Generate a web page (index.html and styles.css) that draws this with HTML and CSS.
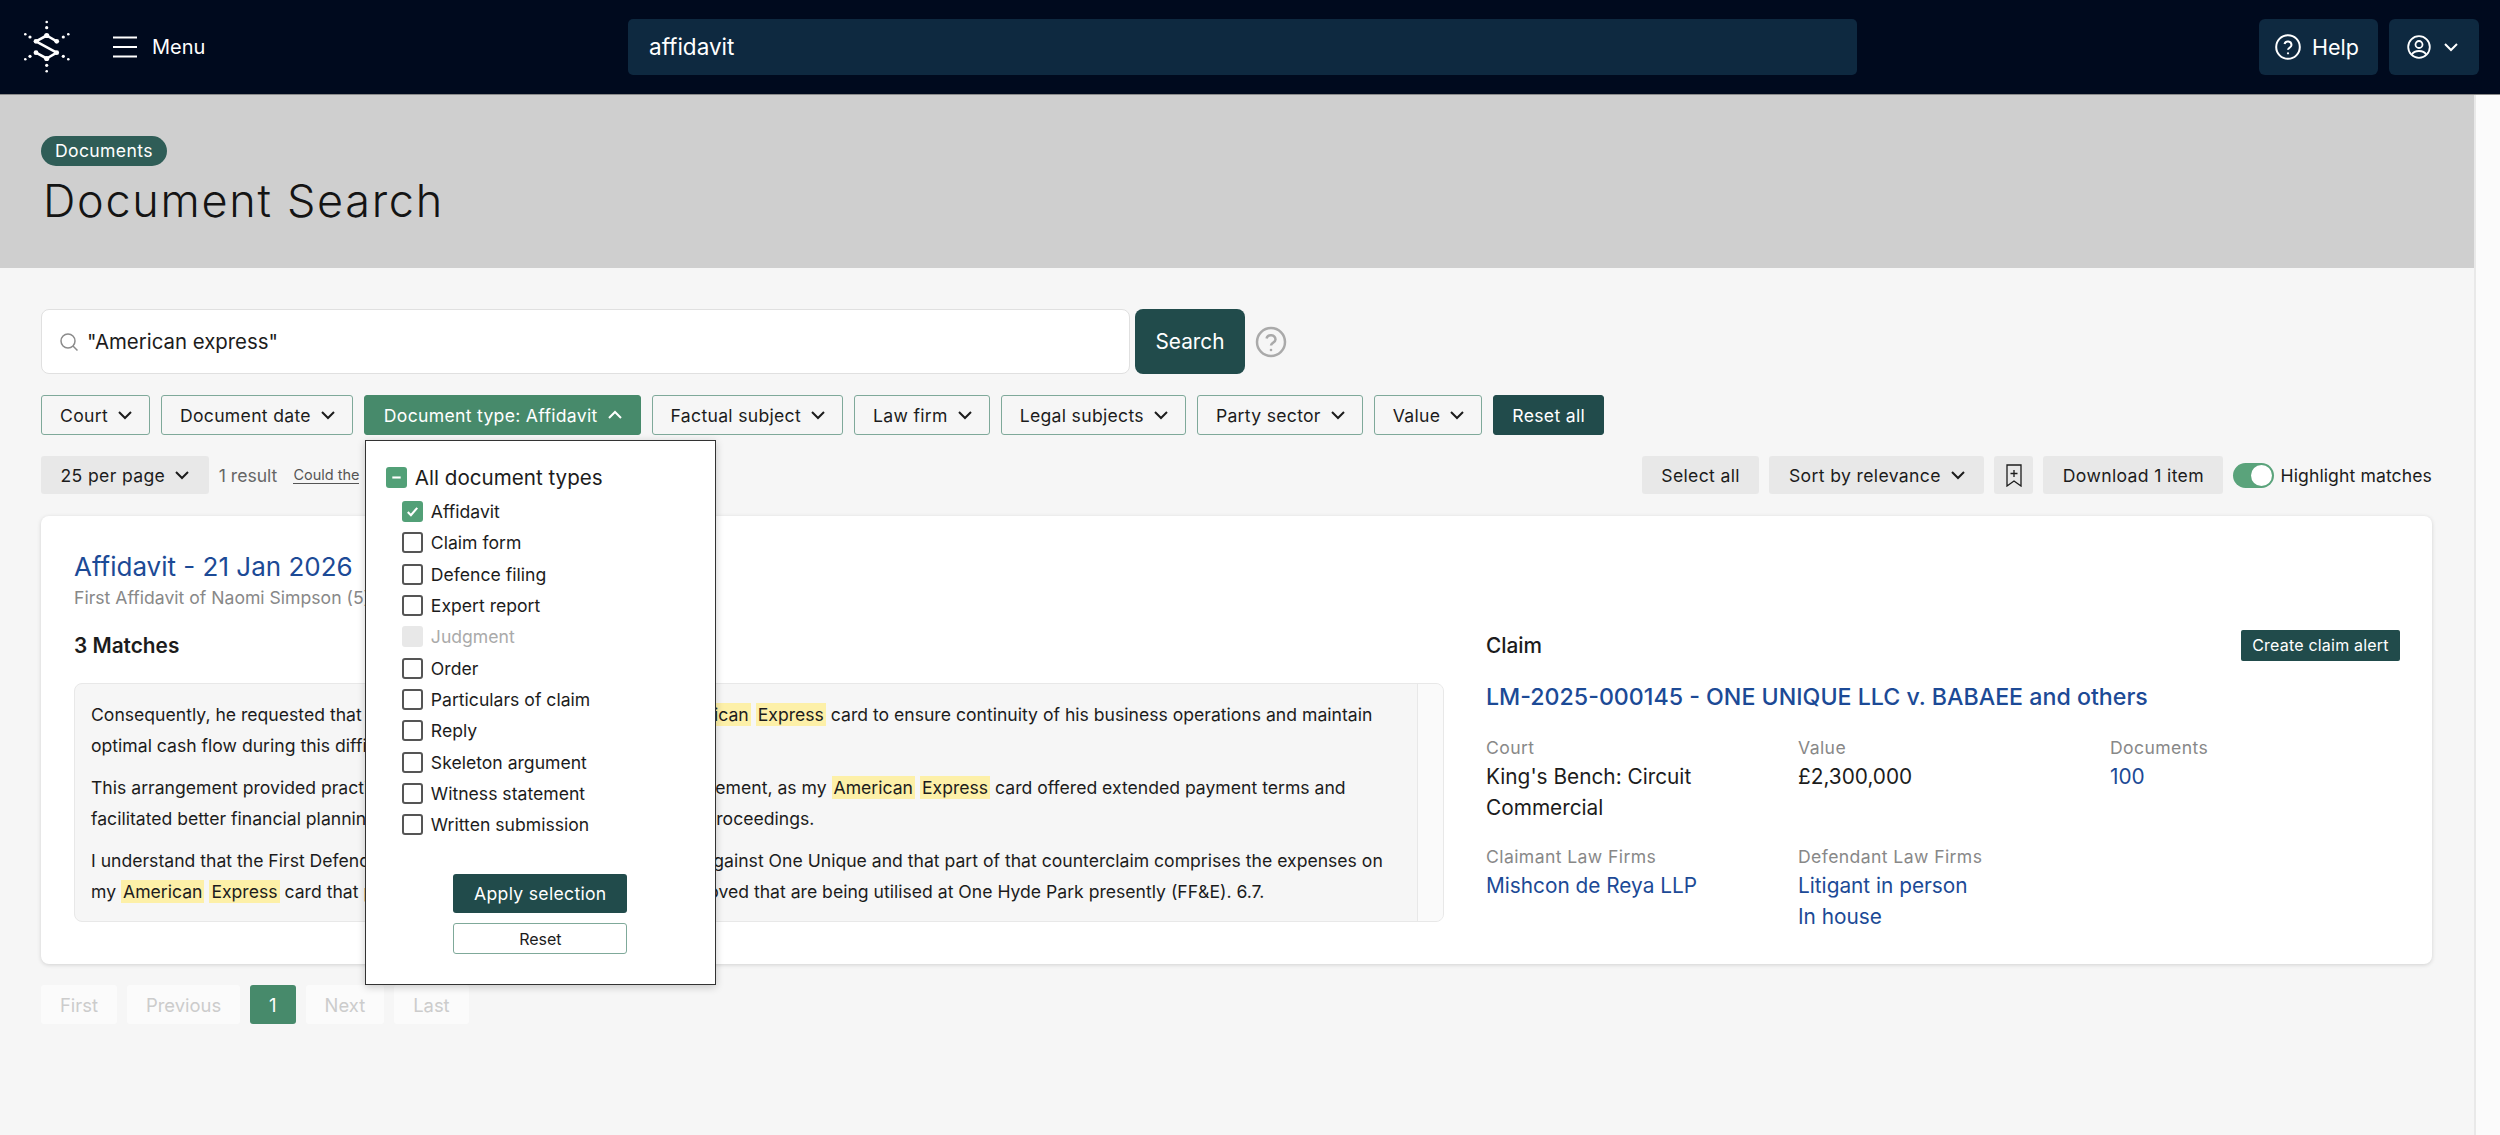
FILE: index.html
```html
<!DOCTYPE html>
<html lang="en">

<head>
    <meta charset="UTF-8">
    <title>Document Search</title>
    <link rel="stylesheet" href="styles.css">
</head>

<body>
    <header class="topbar">
        <svg class="logo" viewBox="23 18 48 54">
            <path d="M56.7 39.3 46.7 33.5 36 39.3 56.7 50.7 46.7 56.5 36 50.7" fill="none" stroke="#fff" stroke-width="2.6" stroke-linejoin="round"/>
            <g fill="#fff">
                <circle cx="46.7" cy="33.5" r="2.6"/><circle cx="36" cy="39.3" r="2.4"/><circle cx="56.7" cy="39.3" r="2.4"/>
                <circle cx="56.7" cy="50.7" r="2.4"/><circle cx="36" cy="50.7" r="2.4"/><circle cx="46.7" cy="56.5" r="2.6"/>
                <circle cx="46.7" cy="20" r="1.3"/><circle cx="46.7" cy="25.7" r="1.6"/>
                <circle cx="46.7" cy="63.3" r="1.6"/><circle cx="46.7" cy="69.3" r="1.3"/>
                <circle cx="25.3" cy="32.3" r="1.3"/><circle cx="30" cy="35" r="1.6"/>
                <circle cx="68.3" cy="32.3" r="1.3"/><circle cx="63.3" cy="35" r="1.6"/>
                <circle cx="25.3" cy="57.3" r="1.3"/><circle cx="30" cy="54.3" r="1.6"/>
                <circle cx="68.3" cy="57.3" r="1.3"/><circle cx="63.3" cy="54.3" r="1.6"/>
            </g>
        </svg>
        <div class="menu-toggle">
            <svg class="menu-icon" viewBox="0 0 24 22"><path d="M0 1.500H24M0 11H24M0 20.500H24"/></svg>
            <span>Menu</span>
        </div>
        <div class="topbar-search">affidavit</div>
        <div class="topbar-actions">
            <div class="topbar-btn">
                <svg class="help-icon" viewBox="0 0 26 26"><circle cx="13" cy="13" r="11.800"/><path d="M9.500 10a3.600 3.600 0 0 1 7 1c0 2.400-3.500 3-3.500 4.800"/><circle class="dot" cx="13" cy="19.300" r="1.100"/></svg>
                <span>Help</span>
            </div>
            <div class="topbar-btn user-btn">
                <svg class="user-icon" viewBox="0 0 24 24"><circle cx="12" cy="12" r="10.800"/><circle cx="12" cy="9.500" r="3.500"/><path d="M4.800 19.500c1.500-2.600 4-3.500 7.200-3.500s5.700.9 7.200 3.500"/></svg>
                <svg class="chev chev-light" viewBox="0 0 14 14"><path d="M1 4l6 6 6-6"/></svg>
            </div>
        </div>
    </header>

    <div class="page">
        <div class="content">
            <section class="band">
                <span class="pill">Documents</span>
                <h1>Document Search</h1>
            </section>

            <main class="main">
                <div class="search-row">
                    <div class="search-input">
                        <svg class="search-icon" viewBox="0 0 20 20"><circle cx="9" cy="9" r="7"/><path d="M14 14l4.500 4.500"/></svg>
                        <span>"American express"</span>
                    </div>
                    <button class="search-btn">Search</button>
                    <svg class="search-help" viewBox="0 0 32 32"><circle cx="16" cy="16" r="14"/><path d="M11.500 12.500a4.600 4.600 0 0 1 9 1c0 3-4.500 3.500-4.500 6"/><circle class="dot" cx="16" cy="24" r="1.300"/></svg>
                </div>

                <div class="filters">
                    <button class="filter">Court<svg class="chev" viewBox="0 0 14 14"><path d="M1 4l6 6 6-6"/></svg></button>
                    <button class="filter">Document date<svg class="chev" viewBox="0 0 14 14"><path d="M1 4l6 6 6-6"/></svg></button>
                    <div class="filter-wrap">
                        <button class="filter filter-open">Document type: Affidavit<svg class="chev chev-light" viewBox="0 0 14 14"><path d="M1 10l6-6 6 6"/></svg></button>
                        <div class="dropdown">
                            <div class="check-all">
                                <span class="box box-on"><svg viewBox="0 0 20 20"><path d="M6 10h8"/></svg></span>
                                All document types
                            </div>
                            <ul class="check-list">
                                <li><span class="box box-on"><svg viewBox="0 0 20 20"><path d="M5.500 10.500l3 3 6-7"/></svg></span>Affidavit</li>
                                <li><span class="box"></span>Claim form</li>
                                <li><span class="box"></span>Defence filing</li>
                                <li><span class="box"></span>Expert report</li>
                                <li class="disabled"><span class="box"></span>Judgment</li>
                                <li><span class="box"></span>Order</li>
                                <li><span class="box"></span>Particulars of claim</li>
                                <li><span class="box"></span>Reply</li>
                                <li><span class="box"></span>Skeleton argument</li>
                                <li><span class="box"></span>Witness statement</li>
                                <li><span class="box"></span>Written submission</li>
                            </ul>
                            <div class="dropdown-actions">
                                <button class="apply-btn">Apply selection</button>
                                <button class="reset-btn">Reset</button>
                            </div>
                        </div>
                    </div>
                    <button class="filter">Factual subject<svg class="chev" viewBox="0 0 14 14"><path d="M1 4l6 6 6-6"/></svg></button>
                    <button class="filter">Law firm<svg class="chev" viewBox="0 0 14 14"><path d="M1 4l6 6 6-6"/></svg></button>
                    <button class="filter">Legal subjects<svg class="chev" viewBox="0 0 14 14"><path d="M1 4l6 6 6-6"/></svg></button>
                    <button class="filter">Party sector<svg class="chev" viewBox="0 0 14 14"><path d="M1 4l6 6 6-6"/></svg></button>
                    <button class="filter">Value<svg class="chev" viewBox="0 0 14 14"><path d="M1 4l6 6 6-6"/></svg></button>
                    <button class="filter-reset">Reset all</button>
                </div>

                <div class="toolbar">
                    <button class="tool">25 per page<svg class="chev" viewBox="0 0 14 14"><path d="M1 4l6 6 6-6"/></svg></button>
                    <span class="result-count">1 result</span>
                    <a class="could-link">Could the</a>
                    <div class="toolbar-right">
                        <button class="tool">Select all</button>
                        <button class="tool">Sort by relevance<svg class="chev" viewBox="0 0 14 14"><path d="M1 4l6 6 6-6"/></svg></button>
                        <button class="tool tool-icon"><svg class="bookmark" viewBox="0 0 16 23"><path d="M1 1h14v21l-7-5-7 5zM8 6v7M4.500 9.500h7"/></svg></button>
                        <button class="tool">Download 1 item</button>
                        <span class="toggle"><span class="knob"></span></span>
                        <span class="toggle-label">Highlight matches</span>
                    </div>
                </div>

                <article class="card">
                    <h2 class="doc-title">Affidavit - 21 Jan 2026</h2>
                    <p class="doc-sub">First Affidavit of Naomi Simpson (5)</p>
                    <div class="card-cols">
                        <div>
                            <div class="col-head"><h3>3 Matches</h3></div>
                            <div class="matches">
                                <div class="matches-text">
                                    <p>Consequently, he requested that I allow him to use my own, personal <mark>American</mark> <mark>Express</mark> card to ensure continuity of his business operations and maintain optimal cash flow during this difficult period for the company.</p>
                                    <p>This arrangement provided practical benefits for both of us, under our agreement, as my <mark>American</mark> <mark>Express</mark> card offered extended payment terms and facilitated better financial planning for the future legal costs of both these proceedings.</p>
                                    <p>I understand that the First Defendant has now brought a big counterclaim against One Unique and that part of that counterclaim comprises the expenses on my <mark>American</mark> <mark>Express</mark> card that paid for the fittings, and items I have approved that are being utilised at One Hyde Park presently (FF&amp;E). 6.7.</p>
                                </div>
                                <div class="matches-scroll"></div>
                            </div>
                        </div>
                        <div>
                            <div class="col-head col-head-claim">
                                <h3>Claim</h3>
                                <button class="alert-btn">Create claim alert</button>
                            </div>
                            <a class="claim-title">LM-2025-000145 - ONE UNIQUE LLC v. BABAEE and others</a>
                            <div class="claim-grid">
                                <div><div class="label">Court</div><div class="value">King's Bench: Circuit Commercial</div></div>
                                <div><div class="label">Value</div><div class="value">£2,300,000</div></div>
                                <div><div class="label">Documents</div><div class="value link">100</div></div>
                                <div><div class="label">Claimant Law Firms</div><div class="value link">Mishcon de Reya LLP</div></div>
                                <div><div class="label">Defendant Law Firms</div><div class="value link">Litigant in person<br>In house</div></div>
                            </div>
                        </div>
                    </div>
                </article>

                <nav class="pager">
                    <span class="page-btn">First</span>
                    <span class="page-btn">Previous</span>
                    <span class="page-btn page-on">1</span>
                    <span class="page-btn">Next</span>
                    <span class="page-btn">Last</span>
                </nav>
            </main>
        </div>
        <div class="scroll-track"></div>
    </div>
</body>

</html>
```

FILE: styles.css
```css
* {
    box-sizing: border-box;
}

html,
body {
    height: 100%;
}

body {
    margin: 0;
    overflow: hidden;
    display: flex;
    flex-direction: column;
    font-family: Inter, "Liberation Sans", sans-serif;
    font-size: 17.600px;
    color: #1c1c1c;
    background-color: #f6f6f6;
}

button {
    font-family: inherit;
    cursor: pointer;
}

svg {
    flex: none;
}

/* Top bar */
.topbar {
    height: 95px;
    flex: none;
    display: flex;
    align-items: center;
    padding: 0 21px 1px 23px;
    background-color: #000a1e;
    border-bottom: 1px solid #8a8a8a;
    color: white;
}

.logo {
    width: 48px;
    height: 54px;
}

.menu-toggle {
    width: 557px;
    padding-left: 42px;
    display: flex;
    align-items: center;
    gap: 15px;
    font-size: 20px;
}

.menu-icon {
    width: 24px;
    height: 22px;
    fill: none;
    stroke: white;
    stroke-width: 2;
}

.topbar-search {
    width: 1229px;
    height: 56px;
    display: flex;
    align-items: center;
    padding-left: 21px;
    background-color: #0e2940;
    border-radius: 5px;
    font-size: 22.500px;
}

.topbar-actions {
    margin-left: auto;
    display: flex;
    gap: 11px;
}

.topbar-btn {
    width: 119px;
    height: 56px;
    display: flex;
    align-items: center;
    gap: 11px;
    padding-left: 16px;
    background-color: #0e2940;
    border-radius: 6px;
    font-size: 21.500px;
}

.user-btn {
    width: 90px;
    gap: 13px;
    padding-left: 18px;
}

.help-icon,
.user-icon {
    width: 26px;
    height: 26px;
    fill: none;
    stroke: white;
    stroke-width: 2;
}

.user-icon {
    width: 24px;
    height: 24px;
    stroke-width: 1.800;
}

.help-icon .dot,
.search-help .dot {
    stroke: none;
}

.help-icon .dot {
    fill: white;
}

.chev {
    width: 14px;
    height: 14px;
    margin-left: 10px;
    fill: none;
    stroke: #1c1c1c;
    stroke-width: 2;
}

.chev-light {
    stroke: white;
}

.user-btn .chev {
    margin-left: 0;
}

/* Page */
.page {
    flex: 1;
    display: flex;
    min-height: 0;
}

.content {
    flex: 1;
    min-width: 0;
}

.scroll-track {
    width: 26px;
    flex: none;
    background-color: #fbfbfb;
    border-left: 2px solid #e9e9e9;
}

.band {
    height: 173px;
    padding: 41px 44px 0 41px;
    background-color: #cfcfcf;
}

.pill {
    display: block;
    width: fit-content;
    height: 30px;
    padding: 0 14px;
    line-height: 30px;
    border-radius: 15px;
    background-color: #2f5d57;
    color: white;
    letter-spacing: 0.350px;
}

h1 {
    margin: 7px 0 0 2px;
    font-size: 45px;
    line-height: 56px;
    font-weight: 300;
    letter-spacing: 1.700px;
    color: #141414;
}

.main {
    padding: 41px 42px 0 41px;
}

.search-row {
    display: flex;
    align-items: center;
}

.search-input {
    width: 1089px;
    height: 65px;
    display: flex;
    align-items: center;
    gap: 8px;
    padding-left: 17px;
    background-color: white;
    border: 1px solid #e0e0e0;
    border-radius: 8px;
    font-size: 20.400px;
}

.search-icon {
    width: 20px;
    height: 20px;
    fill: none;
    stroke: #8b8b8b;
    stroke-width: 1.500;
}

.search-btn {
    width: 110px;
    height: 65px;
    margin-left: 5px;
    border: none;
    border-radius: 8px;
    background-color: #214b4b;
    color: white;
    font-size: 20.800px;
}

.search-help {
    width: 32px;
    height: 32px;
    margin-left: 10px;
    fill: none;
    stroke: #aaa;
    stroke-width: 2.500;
}

.search-help .dot {
    fill: #aaa;
}

/* Filters */
.filters {
    display: flex;
    gap: 11px;
    margin-top: 21px;
}

.filter,
.filter-reset {
    height: 40px;
    display: flex;
    align-items: center;
    padding: 0 17px 0 18px;
    background: transparent;
    border: 1px solid #7fa99a;
    border-radius: 3px;
    color: #1c1c1c;
    font-size: 17.600px;
    letter-spacing: 0.300px;
    white-space: nowrap;
}

.filter-open {
    padding: 0 18px 0 19px;
    background-color: #478a6b;
    border-color: #478a6b;
    color: white;
}

.filter-reset {
    padding: 0 18px;
    background-color: #214b4b;
    border-color: #214b4b;
    color: white;
}

.filter-wrap {
    position: relative;
}

.dropdown {
    position: absolute;
    top: 45px;
    left: 1px;
    z-index: 5;
    width: 351px;
    height: 545px;
    padding: 26px 0 0;
    background-color: white;
    border: 1px solid #333;
    box-shadow: 0 2px 8px rgba(0, 0, 0, 0.2);
}

.check-all {
    display: flex;
    align-items: center;
    gap: 8px;
    padding-left: 20px;
    height: 21px;
    font-size: 20.600px;
}

.box {
    width: 21px;
    height: 21px;
    flex: none;
    display: inline-flex;
    border: 2px solid #555;
    border-radius: 3px;
}

.box-on {
    border: none;
    background-color: #52a077;
}

.box svg {
    width: 21px;
    height: 21px;
    fill: none;
    stroke: white;
    stroke-width: 2;
}

.check-list {
    list-style: none;
    margin: 8px 0 0;
    padding: 0 0 0 36px;
}

.check-list li {
    height: 31.300px;
    display: flex;
    align-items: center;
    gap: 8px;
}

.check-list .disabled {
    color: #aaa;
}

.check-list .disabled .box {
    border: none;
    background-color: #e8e8e8;
}

.dropdown-actions {
    margin-top: 34px;
    display: flex;
    flex-direction: column;
    align-items: center;
    gap: 10px;
}

.apply-btn,
.reset-btn {
    width: 174px;
    border-radius: 3px;
}

.apply-btn {
    height: 39px;
    border: none;
    background-color: #214b4b;
    color: white;
    font-size: 17.600px;
    letter-spacing: 0.300px;
}

.reset-btn {
    height: 31px;
    background-color: white;
    border: 1px solid #7fa99a;
    color: #1c1c1c;
    font-size: 16px;
}

/* Toolbar */
.toolbar {
    display: flex;
    align-items: center;
    margin-top: 21px;
    height: 38px;
}

.tool {
    height: 38px;
    display: flex;
    align-items: center;
    padding: 0 19.500px;
    background-color: #e8e8e8;
    border: none;
    border-radius: 3px;
    color: #1c1c1c;
    font-size: 17.600px;
    letter-spacing: 0.350px;
    white-space: nowrap;
}

.tool-icon {
    width: 39px;
    padding: 0;
    justify-content: center;
}

.bookmark {
    width: 16px;
    height: 23px;
    fill: none;
    stroke: #1c1c1c;
    stroke-width: 1.300;
}

.result-count {
    margin-left: 10px;
    color: #666;
}

.could-link {
    margin-left: 16px;
    color: #555;
    font-size: 14.500px;
    border-bottom: 1px solid #555;
}

.toolbar-right {
    margin-left: auto;
    display: flex;
    align-items: center;
    gap: 10px;
}

.toggle {
    width: 41px;
    height: 25px;
    display: flex;
    justify-content: flex-end;
    padding: 2px;
    background-color: #5aa37b;
    border-radius: 13px;
}

.knob {
    width: 21px;
    height: 21px;
    border-radius: 50%;
    background-color: white;
}

.toggle-label {
    margin-left: -4px;
    letter-spacing: 0.100px;
}

/* Result card */
.card {
    margin-top: 22px;
    height: 448px;
    padding: 34px 32px 0 33px;
    background-color: white;
    border-radius: 8px;
    box-shadow: 0 1px 4px rgba(0, 0, 0, 0.15);
}

.doc-title {
    margin: 0;
    font-size: 26px;
    line-height: 34px;
    font-weight: 400;
    color: #1c4a96;
}

.doc-sub {
    margin: 1px 0 0;
    line-height: 26px;
    color: #888;
}

.card-cols {
    display: grid;
    grid-template-columns: 1370px 914px;
    column-gap: 42px;
    margin-top: 17px;
}

.col-head {
    height: 34px;
    display: flex;
    align-items: center;
    justify-content: space-between;
}

.col-head h3 {
    margin: 0;
    font-size: 20.800px;
    font-weight: 600;
}

.col-head-claim h3 {
    font-weight: 500;
}

.alert-btn {
    height: 31px;
    width: 159px;
    padding: 0;
    border: none;
    border-radius: 2px;
    background-color: #214b4b;
    color: white;
    font-size: 16px;
    letter-spacing: 0.200px;
}

.matches {
    display: flex;
    height: 239px;
    margin-top: 21px;
    background-color: #f6f6f6;
    border: 1px solid #e8e8e8;
    border-radius: 8px;
    overflow: hidden;
}

.matches-text {
    flex: 1;
    padding: 15px 22px 0 16px;
    line-height: 31px;
}

.matches-text p {
    margin: 0 0 11px;
}

mark {
    padding: 1px 2px;
    background-color: #fdf0a8;
    color: inherit;
}

.matches-scroll {
    width: 26px;
    flex: none;
    background-color: #fafafa;
    border-left: 1px solid #e8e8e8;
}

.claim-title {
    display: block;
    margin-top: 18px;
    font-size: 23.200px;
    line-height: 34px;
    font-weight: 500;
    color: #1c4a96;
}

.claim-grid {
    display: grid;
    grid-template-columns: repeat(3, 312px);
    row-gap: 21px;
    margin-top: 21px;
}

.label {
    line-height: 26px;
    color: #888;
    letter-spacing: 0.400px;
}

.value {
    font-size: 20.800px;
    line-height: 31px;
}

.link {
    color: #1c4a96;
}

/* Pagination */
.pager {
    display: flex;
    gap: 10px;
    margin-top: 21px;
}

.page-btn {
    height: 39px;
    display: flex;
    align-items: center;
    padding: 0 19px;
    background-color: #fbfbfb;
    border-radius: 3px;
    color: #ccc;
    font-size: 18.400px;
}

.page-on {
    background-color: #478a6b;
    color: white;
}
```
